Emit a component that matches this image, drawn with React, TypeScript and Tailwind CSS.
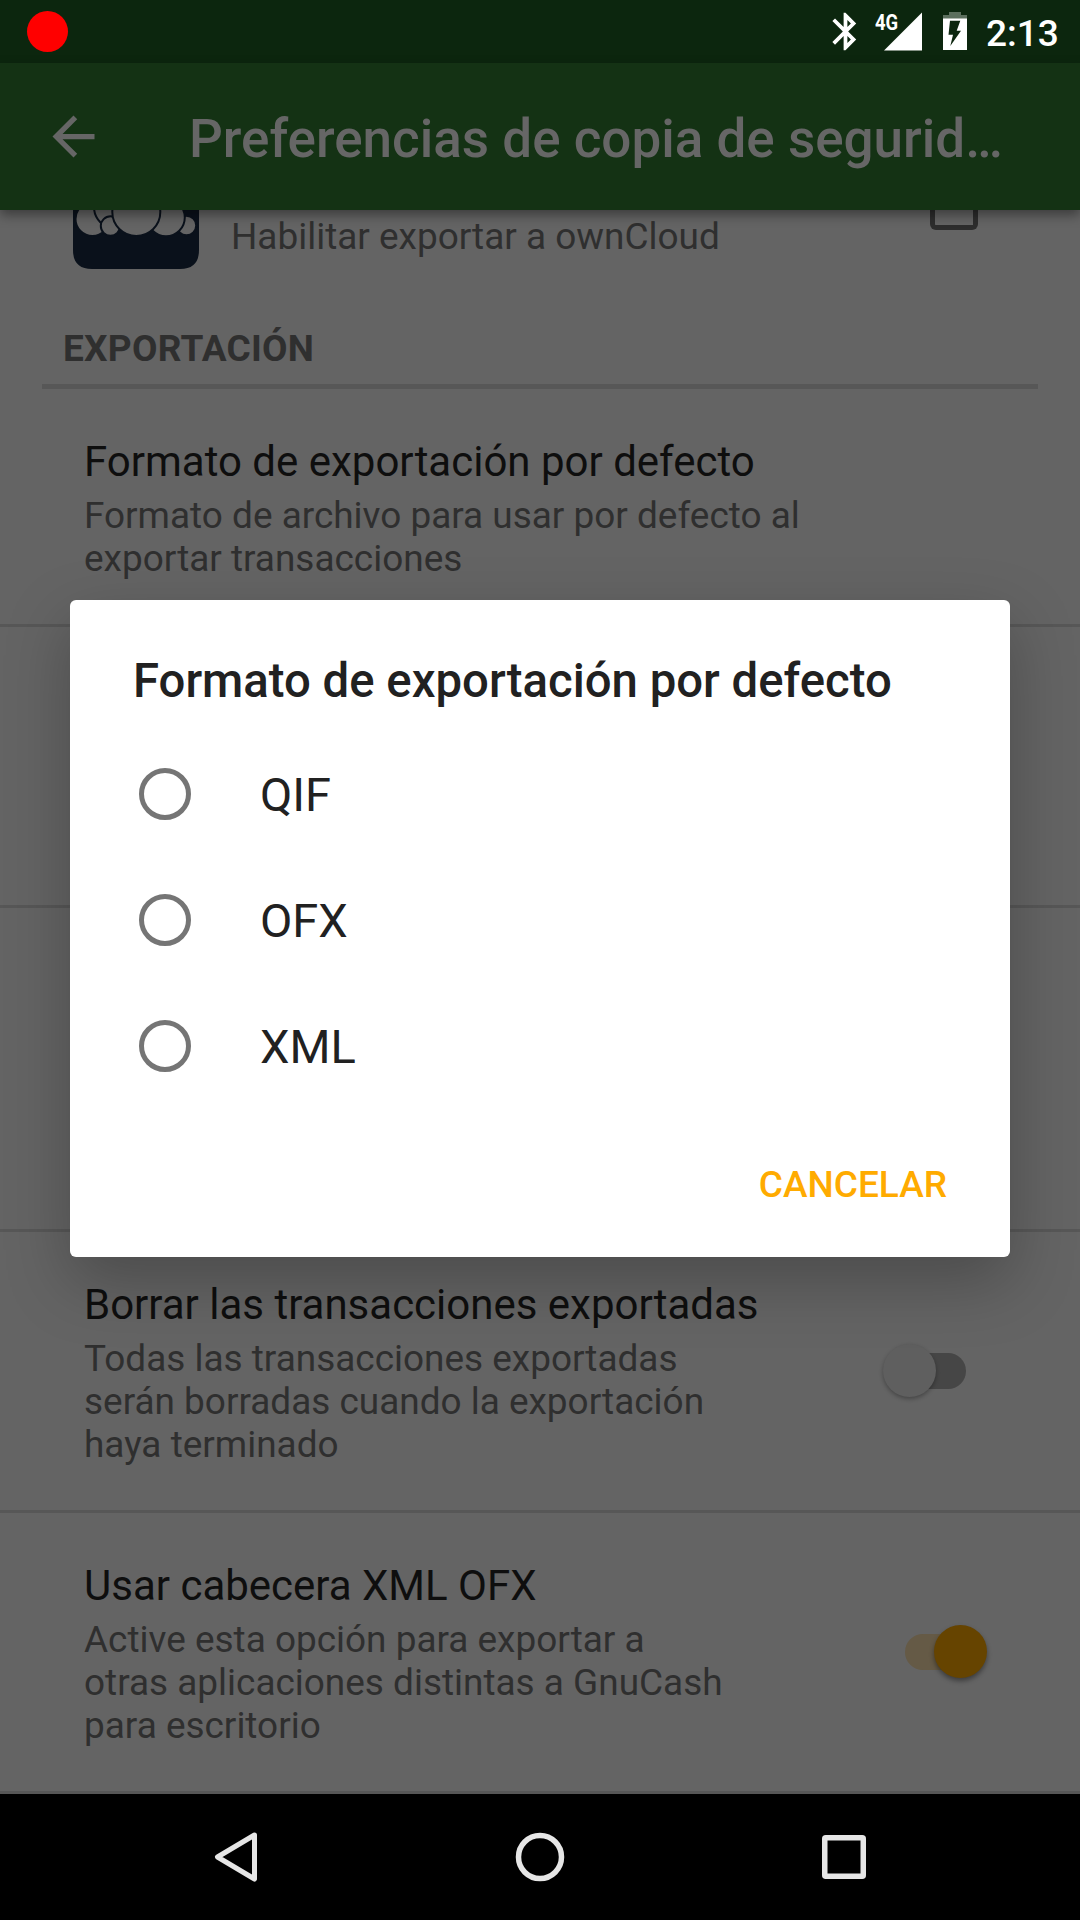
import React from "react";

function Bluetooth() {
  return (
    <svg className="h-[45px] w-[45px]" viewBox="0 0 24 24" fill="#fff">
      <path d="M17.71 7.71L12 2h-1v7.59L6.41 5 5 6.41 10.59 12 5 17.59 6.41 19 11 14.41V22h1l5.71-5.71-4.3-4.29 4.3-4.29zM13 5.83l1.88 1.88L13 9.59V5.83zm1.88 10.46L13 18.17v-3.76l1.88 1.88z" />
    </svg>
  );
}

function StatusBar() {
  return (
    <div className="flex h-[63px] shrink-0 items-center bg-[#0c260e] pl-[27px] pr-[22px]">
      <div className="h-[41px] w-[41px] rounded-full bg-[#ff0000]" />
      <div className="ml-auto flex items-center">
        <Bluetooth />
        <div className="relative ml-[6px] h-[63px] w-[48px]">
          <svg className="h-[63px] w-[48px]" viewBox="0 0 48 63">
            <path d="M10 50.500L48 12.500V50.500Z" fill="#fff" />
          </svg>
          <span className="absolute left-[1px] top-[9px] origin-left scale-x-[0.82] text-[22.500px] font-bold leading-[26px] text-white">4G</span>
        </div>
        <svg className="ml-[21px] h-[63px] w-[24px]" viewBox="0 0 24 63">
          <path d="M6 12h12v3h6v4H0v-4h6z" fill="#5c6f5d" />
          <path fillRule="evenodd" d="M0 18.500h24V50H0zM7 20.700L5.500 34.700H10L7.300 46L18 30.700H13.700L17.300 20.700Z" fill="#fff" />
        </svg>
        <span className="ml-[19px] mt-[3px] w-[72px] whitespace-nowrap text-[37px] font-medium leading-[43px] text-white">2:13</span>
      </div>
    </div>
  );
}

function Toolbar() {
  return (
    <div className="relative z-10 flex h-[147px] shrink-0 items-center bg-[#143214] pl-[42px] shadow-[0_5px_11px_rgba(0,0,0,0.4)]">
      <svg className="h-[63px] w-[63px]" viewBox="0 0 24 24" fill="#666">
        <path d="M20 11H7.830l5.590-5.590L12 4l-8 8 8 8 1.410-1.410L7.830 13H20v-2z" />
      </svg>
      <h1 className="ml-[84px] mt-[5px] whitespace-nowrap text-[53px] font-medium leading-[62px] text-[#666]">
        Preferencias de copia de segurid…
      </h1>
    </div>
  );
}

function OwnCloudIcon() {
  return (
    <svg className="h-[60px] w-[126px]" viewBox="73 210 126 60">
      <path d="M73 210H199V250Q199 269 180 269H92Q73 269 73 250Z" fill="#0a111b" />
      <g fill="#646464" stroke="#0a111b" strokeWidth="2">
        <circle cx="92.500" cy="219" r="17" />
        <circle cx="115.500" cy="207" r="21.500" />
        <circle cx="110.500" cy="226" r="9.700" />
        <circle cx="186.500" cy="225.500" r="9.700" />
        <circle cx="166" cy="217.500" r="18.800" />
        <circle cx="136.300" cy="212" r="24" />
      </g>
    </svg>
  );
}

function Switch({ on }: { on?: boolean }) {
  return (
    <div className="relative mr-[93px] mt-[112px] h-[53px] w-[104px] shrink-0">
      {on ? (
        <>
          <div className="absolute left-[22px] top-[9px] h-[36px] w-[72px] rounded-full bg-[#655a46]" />
          <div className="absolute left-[51px] top-0 h-[53px] w-[53px] rounded-full bg-[#664400] shadow-[0_3px_5px_rgba(0,0,0,0.4)]" />
        </>
      ) : (
        <>
          <div className="absolute left-[10px] top-[9px] h-[36px] w-[73px] rounded-full bg-[#464646]" />
          <div className="absolute left-0 top-0 h-[53px] w-[53px] rounded-full bg-[#5f5f5f] shadow-[0_2px_4px_rgba(0,0,0,0.3)]" />
        </>
      )}
    </div>
  );
}

function Preference({ title, lines, children }: { title: string; lines: string[]; children?: React.ReactNode }) {
  return (
    <div className="flex min-h-0 flex-1 justify-between pl-[84px]">
      <div className="pt-[48px]">
        <h2 className="whitespace-nowrap text-[42px] leading-[49px] text-[#0e0e0e]">{title}</h2>
        <div className="mt-[8px] text-[36.950px] leading-[43px] text-[#2f2f2f]">
          {lines.map((line) => (
            <p key={line} className="whitespace-nowrap">{line}</p>
          ))}
        </div>
      </div>
      {children}
    </div>
  );
}

function Option({ label }: { label: string }) {
  return (
    <div className="flex h-[126px] items-center">
      <div className="ml-[6px] h-[52px] w-[52px] rounded-full border-[5px] border-[#757575]" />
      <span className="ml-[69px] mt-[2px] text-[47px] leading-[56px] text-[#212121]">{label}</span>
    </div>
  );
}

function Dialog() {
  return (
    <div className="absolute left-[70px] top-[600px] z-20 flex h-[657px] w-[940px] flex-col rounded-[6px] bg-white pl-[63px] pr-[63px] shadow-[0_24px_64px_rgba(0,0,0,0.25)]">
      <h2 className="mt-[53px] whitespace-nowrap text-[47.300px] font-medium leading-[56px] text-[#212121]">
        Formato de exportación por defecto
      </h2>
      <div className="mt-[22px]">
        <Option label="QIF" />
        <Option label="OFX" />
        <Option label="XML" />
      </div>
      <button className="ml-auto mt-[54px] text-[37px] font-medium leading-[43px] text-[#ffab00]">CANCELAR</button>
    </div>
  );
}

function NavBar() {
  return (
    <div className="flex h-[126px] shrink-0 items-center bg-black px-[206px]">
      <svg className="h-[60px] w-[60px]" viewBox="0 0 60 60" fill="none" stroke="#e6e6e6" strokeWidth="5" strokeLinejoin="round">
        <path d="M48.500 8L11.500 30L48.500 52Z" />
      </svg>
      <svg className="mx-auto h-[60px] w-[60px]" viewBox="0 0 60 60" fill="none" stroke="#e6e6e6" strokeWidth="5.500">
        <circle cx="30" cy="30" r="21.500" />
      </svg>
      <svg className="h-[60px] w-[60px]" viewBox="0 0 60 60" fill="none" stroke="#e6e6e6" strokeWidth="5.500" strokeLinejoin="round">
        <rect x="10.750" y="10.750" width="38.500" height="38.500" rx="1" />
      </svg>
    </div>
  );
}

export default function App() {
  return (
    <div className="relative flex h-[1920px] w-[1080px] flex-col overflow-hidden bg-[#646464] font-['Roboto',sans-serif]">
      <StatusBar />
      <Toolbar />
      <main className="flex min-h-0 flex-1 flex-col">
        <div className="flex h-[117px] shrink-0 items-start pl-[73px] pr-[102px]">
          <OwnCloudIcon />
          <p className="ml-[32px] mt-[5px] whitespace-nowrap text-[36.950px] leading-[43px] text-[#2f2f2f]">
            Habilitar exportar a ownCloud
          </p>
          <div className="ml-auto h-[20px] w-[48px] rounded-b-[6px] border-x-[5px] border-b-[5px] border-[#2d2d2d]" />
        </div>
        <div className="mx-[42px] h-[62px] shrink-0 border-b-[5px] border-[#575757] pl-[21px]">
          <h3 className="text-[37px] font-bold leading-[43px] tracking-[0.25px] text-[#2f2f2f]">EXPORTACIÓN</h3>
        </div>
        <section className="flex h-[238px] shrink-0 flex-col border-b-[3px] border-[#575757]">
          <Preference
            title="Formato de exportación por defecto"
            lines={["Formato de archivo para usar por defecto al", "exportar transacciones"]}
          />
        </section>
        <section className="h-[281px] shrink-0 border-b-[3px] border-[#575757]" />
        <section className="h-[324px] shrink-0 border-b-[3px] border-[#575757]" />
        <section className="flex h-[281px] shrink-0 flex-col border-b-[3px] border-[#575757]">
          <Preference
            title="Borrar las transacciones exportadas"
            lines={["Todas las transacciones exportadas", "serán borradas cuando la exportación", "haya terminado"]}
          >
            <Switch />
          </Preference>
        </section>
        <section className="flex h-[281px] shrink-0 flex-col border-b-[3px] border-[#575757]">
          <Preference
            title="Usar cabecera XML OFX"
            lines={["Active esta opción para exportar a", "otras aplicaciones distintas a GnuCash", "para escritorio"]}
          >
            <Switch on />
          </Preference>
        </section>
      </main>
      <NavBar />
      <Dialog />
    </div>
  );
}
